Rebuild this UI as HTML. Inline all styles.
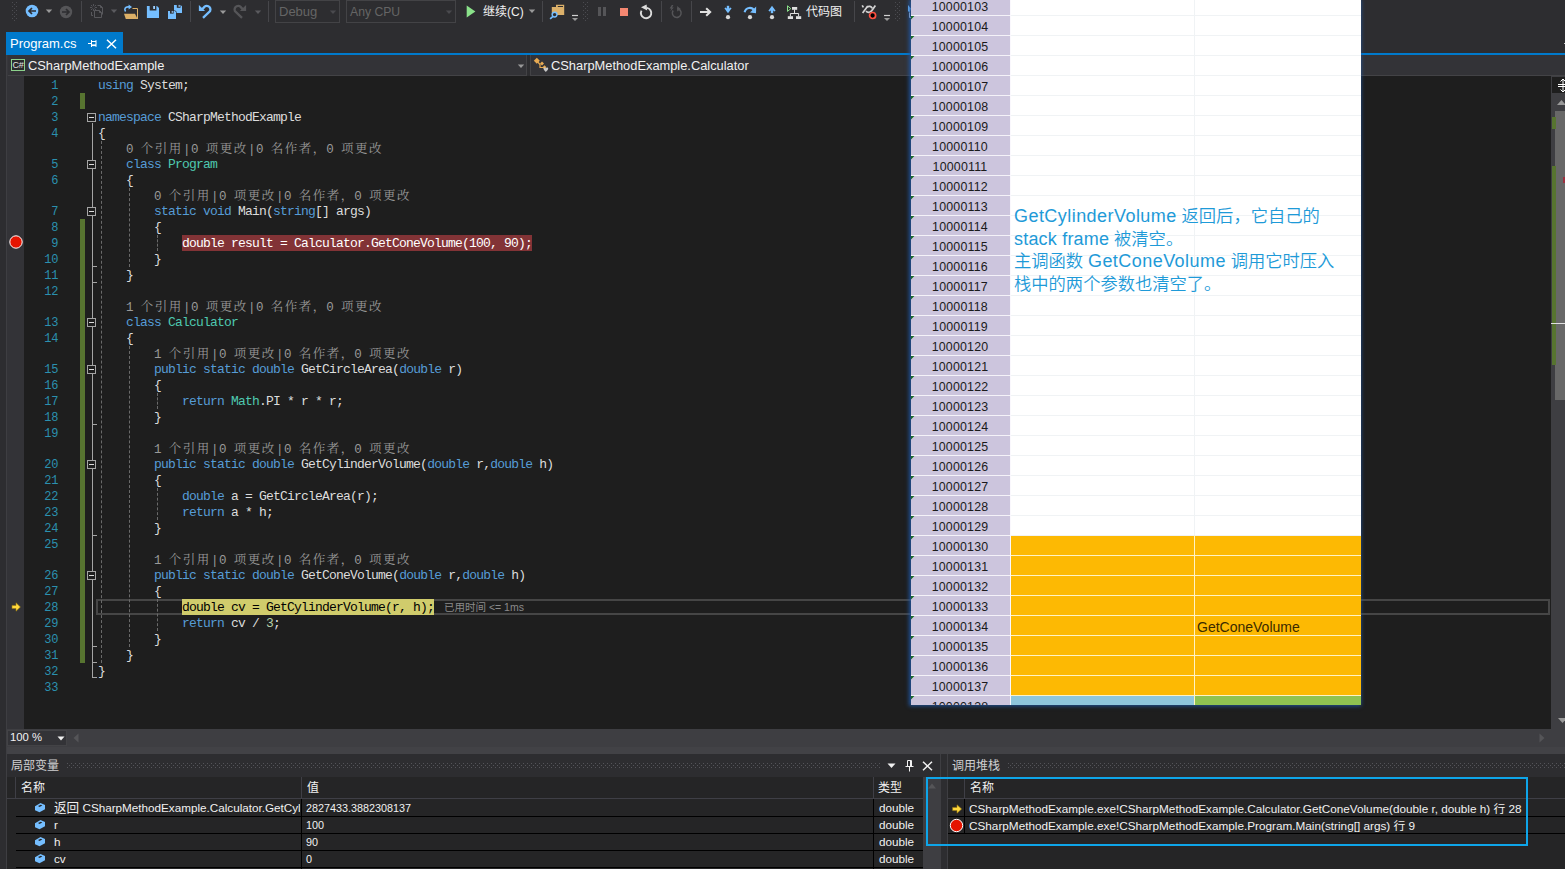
<!DOCTYPE html>
<html lang="zh"><head><meta charset="utf-8"><title>Program.cs</title><style>
html,body{margin:0;padding:0}
body{width:1565px;height:869px;overflow:hidden;background:#2d2d30;position:relative;font-family:"Liberation Sans","Noto Sans CJK SC",sans-serif;font-size:12px;color:#f1f1f1}
.a{position:absolute}
.ui{font-family:"Liberation Sans","Noto Sans CJK SC",sans-serif}
#editor{left:6px;top:76px;width:1545px;height:653px;background:#1e1e1e;overflow:hidden}
.ln{position:absolute;left:0;width:52.3px;text-align:right;color:#2b91af;font-family:"Liberation Mono","Noto Serif CJK SC",monospace;font-size:12px;letter-spacing:-0.2px;height:16px;line-height:16px}
.cl{position:absolute;left:92px;height:16px;line-height:16px;white-space:pre;font-family:"Liberation Mono","Noto Serif CJK SC",monospace;font-size:13px;letter-spacing:-0.8px;color:#dcdcdc}
.cl .k{color:#569cd6}
.cl .t{color:#4ec9b0}
.cl .n{color:#b5cea8}
.lens{position:absolute;height:15px;line-height:15px;white-space:pre;font-family:"Liberation Mono","Noto Serif CJK SC",monospace;font-size:12.5px;color:#999}
.lens .h{letter-spacing:-0.5px}
.lens .z{letter-spacing:1.5px;margin-left:0.75px;margin-right:-0.75px}
.lens .s{letter-spacing:-0.5px;margin:0 1px}
.ob{position:absolute;left:81px;width:7px;height:7px;border:1px solid #a5a5a5;background:#1e1e1e}
.ob:after{content:"";position:absolute;left:1px;top:3px;width:5px;height:1px;background:#dcdcdc}
.vl{position:absolute;width:1px;background:#a5a5a5}
.dl{position:absolute;width:0;border-left:1px dashed #6a6a6a}
.sep{position:absolute;top:1px;width:1px;height:21px;background:#46464a}
.row{position:absolute;left:0;height:17px;line-height:17px;white-space:nowrap}

#bp{color:#fff}
#cur{color:#000}

.xa{position:absolute;left:0;width:98px;padding-right:1px;height:19px;background:#ccc5dd;text-align:center;font-size:12.4px;letter-spacing:0.2px;line-height:22px;color:#1a1a1a}
#note .lt{font-weight:400;font-size:18px;letter-spacing:0.45px}
.dots{background:conic-gradient(from 270deg at 1px 1px,#545459 90deg,transparent 0) 0 0/4px 4px,conic-gradient(from 270deg at 1px 1px,#545459 90deg,transparent 0) 2px 2px/4px 4px}
</style></head><body>
<div id="toolbar" class="a" style="left:0;top:0;width:1565px;height:32px;background:#2d2d30">
<!-- grip -->
<svg class="a" style="left:11px;top:1px" width="7" height="21" viewBox="0 0 7 21"><g fill="#4b4b50"><rect x="1" y="1" width="1" height="1"/><rect x="5" y="1" width="1" height="1"/><rect x="3" y="3" width="1" height="1"/><rect x="1" y="5" width="1" height="1"/><rect x="5" y="5" width="1" height="1"/><rect x="3" y="7" width="1" height="1"/><rect x="1" y="9" width="1" height="1"/><rect x="5" y="9" width="1" height="1"/><rect x="3" y="11" width="1" height="1"/><rect x="1" y="13" width="1" height="1"/><rect x="5" y="13" width="1" height="1"/><rect x="3" y="15" width="1" height="1"/><rect x="1" y="17" width="1" height="1"/><rect x="5" y="17" width="1" height="1"/><rect x="3" y="19" width="1" height="1"/></g></svg>
<!-- back -->
<svg class="a" style="left:24px;top:3px" width="16" height="16" viewBox="0 0 16 16"><circle cx="8" cy="8" r="6.3" fill="#75beff"/><path d="M12 8H5.2M8 5L5 8L8 11" stroke="#2d2d30" stroke-width="1.7" fill="none"/></svg>
<svg class="a" style="left:45px;top:9px" width="8" height="5" viewBox="0 0 8 5"><path d="M0.8 0.6H7.2L4 4.1Z" fill="#999"/></svg>
<!-- forward -->
<svg class="a" style="left:58px;top:4px" width="16" height="16" viewBox="0 0 16 16"><circle cx="8" cy="8" r="6.2" fill="#555558"/><path d="M4 8H10.8M8 5L11 8L8 11" stroke="#2d2d30" stroke-width="1.7" fill="none"/></svg>
<div class="sep" style="left:81px"></div>
<!-- new item (disabled) -->
<svg class="a" style="left:89px;top:3px" width="16" height="17" viewBox="0 0 16 17"><g stroke="#58585c" fill="none" stroke-width="1"><path d="M8.5 2.5H11.5L13.5 4.5V11.5M11.5 2.5V4.5H13.5"/><path d="M5.5 7.5H10.5L12.5 9.5V14.5H5.5ZM10.5 7.5V9.5H12.5" /><path d="M2.5 9V12.5H4"/><path d="M4.5 1V8M1 4.5H8M2 2L7 7M7 2L2 7" stroke-width="0.9"/></g><circle cx="4.5" cy="4.5" r="1.4" fill="#2d2d30"/></svg>
<svg class="a" style="left:110px;top:9px" width="8" height="5" viewBox="0 0 8 5"><path d="M0.8 0.6H7.2L4 4.1Z" fill="#5a5a5e"/></svg>
<!-- open -->
<svg class="a" style="left:123px;top:3px" width="17" height="17" viewBox="0 0 17 17"><path d="M9.5 5.5H14.5V16" stroke="#dcb067" fill="none" stroke-width="1"/><path d="M1 10.7H12L14.6 16H2.8Z" fill="#dcb067"/><path d="M2.6 8.4C0.8 6 2.4 3.9 5 3.9H6.5" stroke="#75beff" stroke-width="1.6" fill="none"/><path d="M5.6 1.4L9 4L5.6 6.6Z" fill="#75beff"/></svg>
<!-- save -->
<svg class="a" style="left:146px;top:5px" width="14" height="14" viewBox="0 0 14 14"><path d="M0.9 1H11L13 3V13.1H0.9Z" fill="#75beff"/><rect x="3.7" y="1" width="6.7" height="4.5" fill="#2d2d30"/><rect x="7.2" y="1" width="1.8" height="3" fill="#9fd0ff"/></svg>
<!-- save all -->
<svg class="a" style="left:167px;top:4px" width="16" height="16" viewBox="0 0 16 16"><path d="M7 0.9H13.6L15 2.3V9H7Z" fill="#75beff"/><rect x="9.8" y="0.9" width="3.7" height="2.9" fill="#2d2d30"/><rect x="11.6" y="0.9" width="1.1" height="2" fill="#9fd0ff"/><path d="M0.5 6.4H8.2L9.6 7.8V15.5H0.5Z" fill="#2d2d30"/><path d="M1 6.9H7.8L9 8.1V15H1Z" fill="#75beff"/><rect x="3" y="6.9" width="3.6" height="2.7" fill="#2d2d30"/><rect x="4.7" y="6.9" width="1.1" height="1.9" fill="#9fd0ff"/></svg>
<div class="sep" style="left:190px"></div>
<!-- undo -->
<svg class="a" style="left:197px;top:3px" width="16" height="17" viewBox="0 0 16 17"><path d="M4.4 7Q5.6 5.7 6.5 5A3.6 3.6 0 1 1 13.1 8L6 14.8" stroke="#75beff" stroke-width="2.3" fill="none"/><path d="M1.9 1.9V8.1H8.1Z" fill="#75beff"/></svg>
<svg class="a" style="left:219px;top:10px" width="8" height="5" viewBox="0 0 8 5"><path d="M0.8 0.6H7.2L4 4.1Z" fill="#999"/></svg>
<!-- redo -->
<svg class="a" style="left:232px;top:3px" width="16" height="17" viewBox="0 0 16 17"><g transform="translate(16,0) scale(-1,1)"><path d="M4.4 7Q5.6 5.7 6.5 5A3.6 3.6 0 1 1 13.1 8L6 14.8" stroke="#555558" stroke-width="2.3" fill="none"/><path d="M1.9 1.9V8.1H8.1Z" fill="#555558"/></g></svg>
<svg class="a" style="left:254px;top:10px" width="8" height="5" viewBox="0 0 8 5"><path d="M0.8 0.6H7.2L4 4.1Z" fill="#5a5a5e"/></svg>
<div class="sep" style="left:268px"></div>
<!-- combos -->
<div class="a" style="left:275px;top:0px;width:63px;height:21px;border:1px solid #434346"></div>
<div class="a" style="left:279px;top:2px;height:20px;line-height:20px;font-size:13px;color:#656565">Debug</div>
<svg class="a" style="left:329px;top:10px" width="8" height="5" viewBox="0 0 8 5"><path d="M0.8 0.6H7.2L4 4.1Z" fill="#4a4a4e"/></svg>
<div class="a" style="left:346px;top:0px;width:108px;height:21px;border:1px solid #434346"></div>
<div class="a" style="left:350px;top:2px;height:20px;line-height:20px;font-size:12.2px;color:#656565">Any CPU</div>
<svg class="a" style="left:445px;top:10px" width="8" height="5" viewBox="0 0 8 5"><path d="M0.8 0.6H7.2L4 4.1Z" fill="#4a4a4e"/></svg>
<!-- continue -->
<svg class="a" style="left:466px;top:5px" width="10" height="13" viewBox="0 0 10 13"><path d="M0.7 0.4L9.4 6.4L0.7 12.4Z" fill="#8ae28a"/></svg>
<div class="a" style="left:483px;top:2px;height:20px;line-height:20px;font-size:12px;color:#f1f1f1;white-space:nowrap">继续(C)</div>
<svg class="a" style="left:528px;top:9px" width="8" height="5" viewBox="0 0 8 5"><path d="M0.8 0.6H7.2L4 4.1Z" fill="#999"/></svg>
<div class="sep" style="left:542px"></div>
<!-- find in files -->
<svg class="a" style="left:549px;top:4px" width="17" height="16" viewBox="0 0 17 16"><path d="M2.8 3H7V0.8H15.2V11H2.8Z" fill="#dbb06a"/><rect x="8.8" y="2" width="5.2" height="1" fill="#2d2d30"/><circle cx="5.6" cy="10.6" r="2.4" fill="#2d2d30" stroke="#75beff" stroke-width="1.4"/><path d="M4 12.3L1.1 14.8" stroke="#75beff" stroke-width="1.7"/></svg>
<svg class="a" style="left:571px;top:14px" width="8" height="8" viewBox="0 0 8 8"><rect x="1" y="0.9" width="6" height="1.2" fill="#d0d0d0"/><path d="M1 3.9H7L4 7Z" fill="#999"/></svg>
<svg class="a" style="left:582px;top:1px" width="7" height="21" viewBox="0 0 7 21"><g fill="#4b4b50"><rect x="1" y="1" width="1" height="1"/><rect x="5" y="1" width="1" height="1"/><rect x="3" y="3" width="1" height="1"/><rect x="1" y="5" width="1" height="1"/><rect x="5" y="5" width="1" height="1"/><rect x="3" y="7" width="1" height="1"/><rect x="1" y="9" width="1" height="1"/><rect x="5" y="9" width="1" height="1"/><rect x="3" y="11" width="1" height="1"/><rect x="1" y="13" width="1" height="1"/><rect x="5" y="13" width="1" height="1"/><rect x="3" y="15" width="1" height="1"/><rect x="1" y="17" width="1" height="1"/><rect x="5" y="17" width="1" height="1"/><rect x="3" y="19" width="1" height="1"/></g></svg>
<!-- pause -->
<div class="a" style="left:598px;top:7px;width:3px;height:9px;background:#555558"></div>
<div class="a" style="left:603px;top:7px;width:3px;height:9px;background:#555558"></div>
<!-- stop -->
<div class="a" style="left:620px;top:8px;width:8px;height:8px;background:#f48771"></div>
<!-- restart -->
<svg class="a" style="left:638px;top:4px" width="16" height="17" viewBox="0 0 16 17"><path d="M8.9 3.9A5.2 5.2 0 1 1 3.5 6.6" stroke="#dcdcdc" stroke-width="1.9" fill="none"/><path d="M3 3.3L8.6 0.5L9.2 6.4Z" fill="#dcdcdc"/></svg>
<div class="sep" style="left:661px"></div>
<!-- apply changes (disabled) -->
<svg class="a" style="left:668px;top:4px" width="16" height="17" viewBox="0 0 16 17"><path d="M5.1 6.5A4.4 4.4 0 1 0 9.1 4.6" stroke="#555558" stroke-width="1.5" fill="none"/><path d="M9.2 2L12.8 4.9L9.2 7.4Z" fill="#555558"/><path d="M3.8 1L1.6 4.4H3.4L2.2 7.6L5.8 3.6H4L5.4 1Z" fill="#555558"/></svg>
<div class="sep" style="left:691px"></div>
<!-- show next statement -->
<svg class="a" style="left:699px;top:6px" width="13" height="12" viewBox="0 0 13 12"><path d="M1 6H11M7.2 2.2L11.2 6L7.2 9.8" stroke="#e0e0e0" stroke-width="2" fill="none"/></svg>
<!-- step into -->
<svg class="a" style="left:722px;top:4px" width="12" height="17" viewBox="0 0 12 17"><path d="M6 1.8V7.5" stroke="#75beff" stroke-width="2.4" fill="none"/><path d="M2.4 4.2L6 9.2L9.6 4.2L8.2 3.4L6 5.8L3.8 3.4Z" fill="#75beff"/><circle cx="6" cy="13.2" r="2.1" fill="#d8d8d8"/></svg>
<!-- step over -->
<svg class="a" style="left:743px;top:4px" width="15" height="17" viewBox="0 0 15 17"><path d="M1.6 8.2C3 3 9 2.6 11.2 6.6" stroke="#75beff" stroke-width="2.1" fill="none"/><path d="M13.2 2.6L13 9.2L7 8.4Z" fill="#75beff"/><circle cx="7" cy="13.2" r="2.1" fill="#d8d8d8"/></svg>
<!-- step out -->
<svg class="a" style="left:766px;top:4px" width="12" height="17" viewBox="0 0 12 17"><path d="M6 9.2V4" stroke="#75beff" stroke-width="2.4" fill="none"/><path d="M2.4 6.8L6 1.8L9.6 6.8L8.2 7.6L6 5.2L3.8 7.6Z" fill="#75beff"/><circle cx="6" cy="13.2" r="2.1" fill="#d8d8d8"/></svg>
<!-- code map -->
<svg class="a" style="left:786px;top:4px" width="16" height="16" viewBox="0 0 16 16"><path d="M1.5 1.8L4.8 4.6L1.5 7.4Z" fill="none" stroke="#8ae28a" stroke-width="1"/><rect x="6" y="3" width="5.2" height="2.8" fill="#e0e0e0"/><rect x="1.8" y="12.2" width="5.2" height="2.8" fill="#e0e0e0"/><rect x="10" y="12.2" width="5.2" height="2.8" fill="#e0e0e0"/><path d="M8.5 5.5V9.5M4.4 12.4V9.5H12.6V12.4" stroke="#e0e0e0" stroke-width="1" fill="none"/></svg>
<div class="a" style="left:806px;top:2px;height:20px;line-height:20px;font-size:12px;color:#f1f1f1;white-space:nowrap">代码图</div>
<div class="sep" style="left:854px"></div>
<!-- intellitrace-ish -->
<svg class="a" style="left:861px;top:4px" width="16" height="16" viewBox="0 0 16 16"><g stroke="#d4d4d4" stroke-width="1.7" fill="none"><path d="M1.6 9L6.8 2"/><path d="M10.2 7.4L14.4 1.6"/><path d="M6 3.2C8 1.6 10 2.2 11.4 4.4"/><path d="M5 7.2C6.6 8.8 8.8 8.6 10.4 7"/><path d="M1.2 1.4L2.4 3.4"/></g><circle cx="11.6" cy="11.5" r="3" fill="#000" stroke="#ff5040" stroke-width="1.7"/></svg>
<svg class="a" style="left:883px;top:14px" width="8" height="8" viewBox="0 0 8 8"><rect x="1" y="0.9" width="6" height="1.2" fill="#d0d0d0"/><path d="M1 3.9H7L4 7Z" fill="#999"/></svg>
<svg class="a" style="left:894px;top:1px" width="7" height="21" viewBox="0 0 7 21"><g fill="#4b4b50"><rect x="1" y="1" width="1" height="1"/><rect x="5" y="1" width="1" height="1"/><rect x="3" y="3" width="1" height="1"/><rect x="1" y="5" width="1" height="1"/><rect x="5" y="5" width="1" height="1"/><rect x="3" y="7" width="1" height="1"/><rect x="1" y="9" width="1" height="1"/><rect x="5" y="9" width="1" height="1"/><rect x="3" y="11" width="1" height="1"/><rect x="1" y="13" width="1" height="1"/><rect x="5" y="13" width="1" height="1"/><rect x="3" y="15" width="1" height="1"/><rect x="1" y="17" width="1" height="1"/><rect x="5" y="17" width="1" height="1"/><rect x="3" y="19" width="1" height="1"/></g></svg>
<svg class="a" style="left:906px;top:4px" width="6" height="15" viewBox="0 0 6 15"><path d="M2 1L5 4.5L3.5 8.5L2 7Z" fill="#75beff"/><path d="M3.5 8.5V13.5H5" stroke="#d0d8e8" stroke-width="1" fill="none"/></svg>
<div class="a" style="left:1564px;top:43px;width:1px;height:1px;background:#c8c8c8"></div>
</div>

<div class="a" style="left:6px;top:32px;width:117px;height:22px;background:#007acc"></div>
<div class="a" style="left:6px;top:53px;width:1559px;height:2px;background:#007acc"></div>
<div id="tabtxt" class="a" style="left:10px;top:34px;height:20px;line-height:20px;font-size:13px;color:#fff;white-space:nowrap">Program.cs</div>
<svg class="a" style="left:88px;top:39px" width="10" height="10" viewBox="0 0 10 10"><path d="M0 4.5H3.5M3.5 1V8M3.5 2.5H8M8 1.2V7.8" stroke="#fff" stroke-width="1" fill="none"/><rect x="3.5" y="5.4" width="4.5" height="1.7" fill="#fff"/></svg>
<svg class="a" style="left:106px;top:39px" width="11" height="10" viewBox="0 0 11 10"><path d="M1 0.8L10 9.2M10 0.8L1 9.2" stroke="#fff" stroke-width="1.5" fill="none"/></svg>
<!-- nav bar -->
<div class="a" style="left:6px;top:55px;width:1559px;height:21px;background:#2d2d30"></div><div class="a" style="left:7px;top:55px;width:1px;height:21px;background:#37373b"></div>
<div class="a" style="left:8px;top:55px;width:518px;height:20px;background:#333337;border-right:1px solid #434346;border-bottom:1px solid #434346"></div>
<div class="a" style="left:530px;top:55px;width:1035px;height:20px;background:#333337;border-left:1px solid #434346;border-bottom:1px solid #434346"></div>
<div class="a" style="left:11px;top:59px;width:12px;height:10px;border:1px solid #8cd28c;background:#2a2a2c"></div>
<div class="a" style="left:12px;top:60px;width:12px;height:10px;line-height:10px;font-size:9px;color:#e0e0e0;text-align:center;letter-spacing:-0.2px">C#</div>
<div id="nav1" class="a" style="left:28px;top:56px;height:20px;line-height:20px;font-size:12.85px;color:#f1f1f1;white-space:nowrap">CSharpMethodExample</div>
<svg class="a" style="left:517px;top:64px" width="8" height="5" viewBox="0 0 8 5"><path d="M0.8 0.6H7.2L4 4.1Z" fill="#999"/></svg>
<svg class="a" style="left:533px;top:57px" width="16" height="16" viewBox="0 0 16 16"><path d="M4 4L7 7.5V10.5H12" stroke="#e8ab53" stroke-width="1.2" fill="none"/><path d="M3.8 0.8L6.8 3.8L3.8 6.8L0.8 3.8Z" fill="#e8ab53"/><path d="M9 4.5L11 6.5L9 8.5L7 6.5Z" fill="#e8ab53"/><path d="M11.5 8.3L13.5 10.3L11.5 12.3L9.5 10.3Z" fill="#e8ab53"/><path d="M10.5 11.5C10.5 10.3 12.3 10.3 12.8 11.3C13.3 10.3 15.2 10.3 15.2 11.5C15.2 13 13.5 14 12.8 15C12.2 14 10.5 13 10.5 11.5Z" fill="#c8c8c8"/></svg>
<div id="nav2" class="a" style="left:551px;top:56px;height:20px;line-height:20px;font-size:12.85px;color:#f1f1f1;white-space:nowrap">CSharpMethodExample.Calculator</div>

<div id="editor" class="a">
<div class="a" style="left:0;top:0;width:18px;height:653px;background:#333337"></div>
<div class="a" style="left:90px;top:523px;width:1450px;height:12px;border:2px solid #464646"></div>
<div class="a" style="left:176px;top:159px;width:350px;height:16px;background:#823336"></div>
<div class="a" style="left:176px;top:523px;width:252px;height:16px;background:#d0cc6c"></div>
<div class="a" style="left:73.5px;top:17px;width:5px;height:16px;background:#577430"></div>
<div class="a" style="left:73.5px;top:143px;width:5px;height:444px;background:#577430"></div>
<div class="vl" style="left:86px;top:47px;height:555px"></div>
<div class="a" style="left:86px;top:190px;width:5px;height:1px;background:#a5a5a5"></div>
<div class="a" style="left:86px;top:206px;width:5px;height:1px;background:#a5a5a5"></div>
<div class="a" style="left:86px;top:348px;width:5px;height:1px;background:#a5a5a5"></div>
<div class="a" style="left:86px;top:459px;width:5px;height:1px;background:#a5a5a5"></div>
<div class="a" style="left:86px;top:570px;width:5px;height:1px;background:#a5a5a5"></div>
<div class="a" style="left:86px;top:586px;width:5px;height:1px;background:#a5a5a5"></div>
<div class="a" style="left:86px;top:601px;width:5px;height:1px;background:#a5a5a5"></div>
<div class="dl" style="left:95px;top:65px;height:522px"></div>
<div class="dl" style="left:123px;top:112px;height:79px"></div>
<div class="dl" style="left:123px;top:270px;height:301px"></div>
<div class="dl" style="left:151px;top:159px;height:16px"></div>
<div class="dl" style="left:151px;top:317px;height:16px"></div>
<div class="dl" style="left:151px;top:412px;height:32px"></div>
<div class="dl" style="left:151px;top:523px;height:32px"></div>
<div class="ob" style="top:37px"></div>
<div class="ob" style="top:84px"></div>
<div class="ob" style="top:131px"></div>
<div class="ob" style="top:242px"></div>
<div class="ob" style="top:289px"></div>
<div class="ob" style="top:384px"></div>
<div class="ob" style="top:495px"></div>
<div class="ln" style="top:2px">1</div>
<div class="cl" style="top:2px"><span class="k">using</span> System;</div>
<div class="ln" style="top:18px">2</div>
<div class="ln" style="top:34px">3</div>
<div class="cl" style="top:34px"><span class="k">namespace</span> CSharpMethodExample</div>
<div class="ln" style="top:50px">4</div>
<div class="cl" style="top:50px">{</div>
<div class="ln" style="top:81px">5</div>
<div class="cl" style="top:81px">    <span class="k">class</span> <span class="t">Program</span></div>
<div class="lens" style="left:120px;top:66.5px"><span class="h">0 </span><span class="z">个引用</span><span class="s">|</span><span class="h">0 </span><span class="z">项更改</span><span class="s">|</span><span class="h">0 </span><span class="z">名作者，</span><span class="h">0 </span><span class="z">项更改</span></div>
<div class="ln" style="top:97px">6</div>
<div class="cl" style="top:97px">    {</div>
<div class="ln" style="top:128px">7</div>
<div class="cl" style="top:128px">        <span class="k">static</span> <span class="k">void</span> Main(<span class="k">string</span>[] args)</div>
<div class="lens" style="left:148px;top:113.5px"><span class="h">0 </span><span class="z">个引用</span><span class="s">|</span><span class="h">0 </span><span class="z">项更改</span><span class="s">|</span><span class="h">0 </span><span class="z">名作者，</span><span class="h">0 </span><span class="z">项更改</span></div>
<div class="ln" style="top:144px">8</div>
<div class="cl" style="top:144px">        {</div>
<div class="ln" style="top:160px">9</div>
<div class="cl" style="top:160px">            <span id="bp">double result = Calculator.GetConeVolume(100, 90);</span></div>
<div class="ln" style="top:176px">10</div>
<div class="cl" style="top:176px">        }</div>
<div class="ln" style="top:192px">11</div>
<div class="cl" style="top:192px">    }</div>
<div class="ln" style="top:208px">12</div>
<div class="ln" style="top:239px">13</div>
<div class="cl" style="top:239px">    <span class="k">class</span> <span class="t">Calculator</span></div>
<div class="lens" style="left:120px;top:224.5px"><span class="h">1 </span><span class="z">个引用</span><span class="s">|</span><span class="h">0 </span><span class="z">项更改</span><span class="s">|</span><span class="h">0 </span><span class="z">名作者，</span><span class="h">0 </span><span class="z">项更改</span></div>
<div class="ln" style="top:255px">14</div>
<div class="cl" style="top:255px">    {</div>
<div class="ln" style="top:286px">15</div>
<div class="cl" style="top:286px">        <span class="k">public</span> <span class="k">static</span> <span class="k">double</span> GetCircleArea(<span class="k">double</span> r)</div>
<div class="lens" style="left:148px;top:271.5px"><span class="h">1 </span><span class="z">个引用</span><span class="s">|</span><span class="h">0 </span><span class="z">项更改</span><span class="s">|</span><span class="h">0 </span><span class="z">名作者，</span><span class="h">0 </span><span class="z">项更改</span></div>
<div class="ln" style="top:302px">16</div>
<div class="cl" style="top:302px">        {</div>
<div class="ln" style="top:318px">17</div>
<div class="cl" style="top:318px">            <span class="k">return</span> <span class="t">Math</span>.PI * r * r;</div>
<div class="ln" style="top:334px">18</div>
<div class="cl" style="top:334px">        }</div>
<div class="ln" style="top:350px">19</div>
<div class="ln" style="top:381px">20</div>
<div class="cl" style="top:381px">        <span class="k">public</span> <span class="k">static</span> <span class="k">double</span> GetCylinderVolume(<span class="k">double</span> r,<span class="k">double</span> h)</div>
<div class="lens" style="left:148px;top:366.5px"><span class="h">1 </span><span class="z">个引用</span><span class="s">|</span><span class="h">0 </span><span class="z">项更改</span><span class="s">|</span><span class="h">0 </span><span class="z">名作者，</span><span class="h">0 </span><span class="z">项更改</span></div>
<div class="ln" style="top:397px">21</div>
<div class="cl" style="top:397px">        {</div>
<div class="ln" style="top:413px">22</div>
<div class="cl" style="top:413px">            <span class="k">double</span> a = GetCircleArea(r);</div>
<div class="ln" style="top:429px">23</div>
<div class="cl" style="top:429px">            <span class="k">return</span> a * h;</div>
<div class="ln" style="top:445px">24</div>
<div class="cl" style="top:445px">        }</div>
<div class="ln" style="top:461px">25</div>
<div class="ln" style="top:492px">26</div>
<div class="cl" style="top:492px">        <span class="k">public</span> <span class="k">static</span> <span class="k">double</span> GetConeVolume(<span class="k">double</span> r,<span class="k">double</span> h)</div>
<div class="lens" style="left:148px;top:477.5px"><span class="h">1 </span><span class="z">个引用</span><span class="s">|</span><span class="h">0 </span><span class="z">项更改</span><span class="s">|</span><span class="h">0 </span><span class="z">名作者，</span><span class="h">0 </span><span class="z">项更改</span></div>
<div class="ln" style="top:508px">27</div>
<div class="cl" style="top:508px">        {</div>
<div class="ln" style="top:524px">28</div>
<div class="cl" style="top:524px">            <span id="cur">double cv = GetCylinderVolume(r, h);</span></div>
<div class="ln" style="top:540px">29</div>
<div class="cl" style="top:540px">            <span class="k">return</span> cv / <span class="n">3</span>;</div>
<div class="ln" style="top:556px">30</div>
<div class="cl" style="top:556px">        }</div>
<div class="ln" style="top:572px">31</div>
<div class="cl" style="top:572px">    }</div>
<div class="ln" style="top:588px">32</div>
<div class="cl" style="top:588px">}</div>
<div class="ln" style="top:604px">33</div>
<svg class="a" style="left:2.5px;top:159.4px" width="14" height="14" viewBox="0 0 14 14"><circle cx="7" cy="7" r="6.2" fill="#e51400" stroke="#ffffff" stroke-width="1"/></svg>
<svg class="a" style="left:4px;top:525px" width="12" height="12" viewBox="0 0 12 12"><path d="M2 4.4H6V1.8L10.4 6L6 10.2V7.6H2Z" fill="#ffd83c" stroke="#9a7a10" stroke-width="0.6"/></svg>
<div class="a ui" style="left:438px;top:523px;height:16px;line-height:16px;font-size:10.5px;color:#8a8a8a;white-space:nowrap">已用时间 &lt;= 1ms</div>
</div>
<div class="a" style="left:1551px;top:76px;width:14px;height:653px;background:#3e3e42"></div>
<div class="a" style="left:1552px;top:77px;width:13px;height:16px;background:#1e1e1e"></div>
<svg class="a" style="left:1557.5px;top:78px" width="10" height="15" viewBox="0 0 10 15"><path d="M5 1V14M2.5 3.5L5 1L7.5 3.5M2.5 11.5L5 14L7.5 11.5M0 6.5H10M0 8.5H10" stroke="#fff" stroke-width="1" fill="none"/></svg>
<div class="a" style="left:1555px;top:111px;width:10px;height:289px;background:#686868"></div>
<div class="a" style="left:1552px;top:117px;width:4px;height:12px;background:#577430"></div>
<div class="a" style="left:1552px;top:166px;width:4px;height:199px;background:#577430"></div>
<div class="a" style="left:1563px;top:177px;width:2px;height:6px;background:#9d3040"></div>
<div class="a" style="left:1551px;top:323px;width:14px;height:1px;background:#e0e0e0"></div>
<svg class="a" style="left:1557px;top:99px" width="8" height="6" viewBox="0 0 8 6"><path d="M0 6L4.5 1L9 6Z" fill="#999"/></svg>
<svg class="a" style="left:1558px;top:718px" width="8" height="6" viewBox="0 0 8 6"><path d="M0 0L4.5 5L9 0Z" fill="#999"/></svg>

<!-- hscroll row -->
<div class="a" style="left:6px;top:729px;width:1559px;height:25px;background:#3e3e42"></div>
<div class="a" style="left:6px;top:747px;width:1559px;height:7px;background:#424246"></div>
<div class="a" style="left:7px;top:730px;width:58px;height:14px;background:#333337;border:1px solid #434346"></div>
<div class="a" style="left:10px;top:730px;height:16px;line-height:15px;font-size:11.3px;color:#f1f1f1;white-space:nowrap">100 %</div>
<svg class="a" style="left:57px;top:736px" width="8" height="5" viewBox="0 0 8 5"><path d="M0.5 0.5H7.5L4 4.5Z" fill="#f1f1f1"/></svg>
<svg class="a" style="left:73px;top:733px" width="6" height="10" viewBox="0 0 6 10"><path d="M5.5 0.5V9.5L0.5 5Z" fill="#555558"/></svg>
<svg class="a" style="left:1539px;top:733px" width="6" height="10" viewBox="0 0 6 10"><path d="M0.5 0.5V9.5L5.5 5Z" fill="#555558"/></svg>
<!-- locals panel -->
<div class="a" style="left:7px;top:754px;width:933px;height:115px;background:#2d2d30"></div>
<div class="a" style="left:11px;top:756px;height:20px;line-height:20px;font-size:12px;color:#d0d0d0;white-space:nowrap">局部变量</div>
<div class="a dots" style="left:67px;top:763px;width:814px;height:5px"></div>
<svg class="a" style="left:887px;top:763px" width="9" height="6" viewBox="0 0 9 6"><path d="M0.5 0.5H8.5L4.5 5Z" fill="#f1f1f1"/></svg>
<svg class="a" style="left:905px;top:760px" width="9" height="12" viewBox="0 0 9 12"><path d="M2.5 0.5H6.5M2.5 0.5V6.5M5.5 0.5V6.5M6.5 0.5V6.5M0.5 6.5H8.5M4.5 6.5V11.5" stroke="#f1f1f1" stroke-width="1" fill="none"/></svg>
<svg class="a" style="left:922px;top:761px" width="11" height="10" viewBox="0 0 11 10"><path d="M1 0.8L10 9.2M10 0.8L1 9.2" stroke="#f1f1f1" stroke-width="1.5" fill="none"/></svg>
<div class="a" style="left:7px;top:777px;width:916px;height:92px;background:#252526"></div>
<div class="a" style="left:923px;top:777px;width:17px;height:92px;background:#3e3e42"></div>
<svg class="a" style="left:928px;top:783px" width="8" height="6" viewBox="0 0 8 6"><path d="M0 5.5L4 0.5L8 5.5Z" fill="#555558"/></svg>
<!-- header -->
<div class="a" style="left:7px;top:798px;width:916px;height:1px;background:#3f3f46"></div>
<div class="a" style="left:15px;top:777px;width:1px;height:21px;background:#3f3f46"></div>
<div class="a" style="left:301px;top:777px;width:1px;height:21px;background:#3f3f46"></div>
<div class="a" style="left:873px;top:777px;width:1px;height:21px;background:#3f3f46"></div>
<div class="a" style="left:21px;top:778px;height:20px;line-height:20px;font-size:12px;color:#f1f1f1">名称</div>
<div class="a" style="left:307px;top:778px;height:20px;line-height:20px;font-size:12px;color:#f1f1f1">值</div>
<div class="a" style="left:878px;top:778px;height:20px;line-height:20px;font-size:12px;color:#f1f1f1">类型</div>
<!-- data grid lines -->
<div class="a" style="left:301px;top:799px;width:1px;height:70px;background:#000"></div>
<div class="a" style="left:873px;top:799px;width:1px;height:70px;background:#000"></div>
<div class="a" style="left:16px;top:816px;width:907px;height:1px;background:#000"></div>
<div class="a" style="left:16px;top:833px;width:907px;height:1px;background:#000"></div>
<div class="a" style="left:16px;top:850px;width:907px;height:1px;background:#000"></div>
<div class="a" style="left:16px;top:867px;width:907px;height:1px;background:#000"></div>
<!-- rows -->
<div id="locrows" class="a" style="left:0;top:799px;width:923px;height:70px;font-size:11.7px;color:#f1f1f1">
 <div class="row" style="top:0"><svg class="a" style="left:34px;top:3px" width="12" height="11" viewBox="0 0 12 11"><path d="M1 4.2L6.5 1L11 3V7.2L5.5 10.2L1 8.2Z" fill="#75beff"/><path d="M4 4.1L6.8 2.7L8.3 3.4L5.5 4.9Z" fill="#252526"/></svg><span class="a" style="left:54px;width:246px;overflow:hidden"><span style="font-size:12.6px">返回</span> CSharpMethodExample.Calculator.GetCylinderVolume</span><span class="a" style="left:306px;top:0.5px;font-size:10.8px">2827433.3882308137</span><span class="a" style="left:879px">double</span></div>
 <div class="row" style="top:17px"><svg class="a" style="left:34px;top:3px" width="12" height="11" viewBox="0 0 12 11"><path d="M1 4.2L6.5 1L11 3V7.2L5.5 10.2L1 8.2Z" fill="#75beff"/><path d="M4 4.1L6.8 2.7L8.3 3.4L5.5 4.9Z" fill="#252526"/></svg><span class="a" style="left:54px">r</span><span class="a" style="left:306px;top:0.5px;font-size:10.8px">100</span><span class="a" style="left:879px">double</span></div>
 <div class="row" style="top:34px"><svg class="a" style="left:34px;top:3px" width="12" height="11" viewBox="0 0 12 11"><path d="M1 4.2L6.5 1L11 3V7.2L5.5 10.2L1 8.2Z" fill="#75beff"/><path d="M4 4.1L6.8 2.7L8.3 3.4L5.5 4.9Z" fill="#252526"/></svg><span class="a" style="left:54px">h</span><span class="a" style="left:306px;top:0.5px;font-size:10.8px">90</span><span class="a" style="left:879px">double</span></div>
 <div class="row" style="top:51px"><svg class="a" style="left:34px;top:3px" width="12" height="11" viewBox="0 0 12 11"><path d="M1 4.2L6.5 1L11 3V7.2L5.5 10.2L1 8.2Z" fill="#75beff"/><path d="M4 4.1L6.8 2.7L8.3 3.4L5.5 4.9Z" fill="#252526"/></svg><span class="a" style="left:54px">cv</span><span class="a" style="left:306px;top:0.5px;font-size:10.8px">0</span><span class="a" style="left:879px">double</span></div>
</div>
<!-- splitter -->
<div class="a" style="left:940px;top:754px;width:8px;height:115px;background:#2d2d30;border-left:1px solid #3e3e42;border-right:1px solid #3e3e42;box-sizing:border-box"></div>
<!-- call stack panel -->
<div class="a" style="left:948px;top:754px;width:617px;height:115px;background:#2d2d30"></div>
<div class="a" style="left:952px;top:756px;height:20px;line-height:20px;font-size:12px;color:#d0d0d0;white-space:nowrap">调用堆栈</div>
<div class="a dots" style="left:1008px;top:763px;width:557px;height:5px"></div>
<div class="a" style="left:948px;top:777px;width:617px;height:92px;background:#252526"></div>
<div class="a" style="left:948px;top:798px;width:617px;height:1px;background:#3f3f46"></div>
<div class="a" style="left:964px;top:777px;width:1px;height:21px;background:#3f3f46"></div>
<div class="a" style="left:970px;top:778px;height:20px;line-height:20px;font-size:12px;color:#f1f1f1">名称</div>
<div class="a" style="left:964px;top:799px;width:1px;height:35px;background:#000"></div>
<div class="a" style="left:948px;top:816px;width:617px;height:1px;background:#000"></div>
<div class="a" style="left:948px;top:833px;width:617px;height:1px;background:#000"></div>
<svg class="a" style="left:951px;top:803px" width="12" height="12" viewBox="0 0 12 12"><path d="M1.6 4.4H6V1.8L10.6 6L6 10.2V7.6H1.6Z" fill="#ffd83c" stroke="#9a7a10" stroke-width="0.6"/></svg>
<svg class="a" style="left:949px;top:818px" width="15" height="15" viewBox="0 0 15 15"><circle cx="7.5" cy="7.5" r="6.2" fill="#e51400" stroke="#fff" stroke-width="1"/></svg>
<div id="cs1" class="a" style="left:969px;top:800px;height:17px;line-height:17px;font-size:11.75px;color:#f1f1f1;white-space:nowrap">CSharpMethodExample.exe!CSharpMethodExample.Calculator.GetConeVolume(double r, double h) 行 28</div>
<div id="cs2" class="a" style="left:969px;top:817px;height:17px;line-height:17px;font-size:11.75px;color:#f1f1f1;white-space:nowrap">CSharpMethodExample.exe!CSharpMethodExample.Program.Main(string[] args) 行 9</div>
<!-- blue highlight rectangle -->
<div class="a" style="left:926px;top:777px;width:598px;height:65px;border:2px solid #0ea5e9"></div>

<div class="a" style="left:6px;top:55px;width:1px;height:814px;background:#3e3e42"></div>

<div id="xl" class="a" style="left:911px;top:0;width:450px;height:705px;background:#fff;overflow:hidden;box-shadow:-1.5px 0 4px 1px rgba(32,88,165,0.9)">
<div class="xa" style="top:-4px">10000103</div>
<svg class="a" style="left:0;top:-4px" width="5" height="5" viewBox="0 0 5 5"><path d="M0 0H3.4L0 3.4Z" fill="#1b6b2a"/></svg>
<div class="xa" style="top:16px">10000104</div>
<svg class="a" style="left:0;top:16px" width="5" height="5" viewBox="0 0 5 5"><path d="M0 0H3.4L0 3.4Z" fill="#1b6b2a"/></svg>
<div class="xa" style="top:36px">10000105</div>
<svg class="a" style="left:0;top:36px" width="5" height="5" viewBox="0 0 5 5"><path d="M0 0H3.4L0 3.4Z" fill="#1b6b2a"/></svg>
<div class="xa" style="top:56px">10000106</div>
<svg class="a" style="left:0;top:56px" width="5" height="5" viewBox="0 0 5 5"><path d="M0 0H3.4L0 3.4Z" fill="#1b6b2a"/></svg>
<div class="xa" style="top:76px">10000107</div>
<svg class="a" style="left:0;top:76px" width="5" height="5" viewBox="0 0 5 5"><path d="M0 0H3.4L0 3.4Z" fill="#1b6b2a"/></svg>
<div class="xa" style="top:96px">10000108</div>
<svg class="a" style="left:0;top:96px" width="5" height="5" viewBox="0 0 5 5"><path d="M0 0H3.4L0 3.4Z" fill="#1b6b2a"/></svg>
<div class="xa" style="top:116px">10000109</div>
<svg class="a" style="left:0;top:116px" width="5" height="5" viewBox="0 0 5 5"><path d="M0 0H3.4L0 3.4Z" fill="#1b6b2a"/></svg>
<div class="xa" style="top:136px">10000110</div>
<svg class="a" style="left:0;top:136px" width="5" height="5" viewBox="0 0 5 5"><path d="M0 0H3.4L0 3.4Z" fill="#1b6b2a"/></svg>
<div class="xa" style="top:156px">10000111</div>
<svg class="a" style="left:0;top:156px" width="5" height="5" viewBox="0 0 5 5"><path d="M0 0H3.4L0 3.4Z" fill="#1b6b2a"/></svg>
<div class="xa" style="top:176px">10000112</div>
<svg class="a" style="left:0;top:176px" width="5" height="5" viewBox="0 0 5 5"><path d="M0 0H3.4L0 3.4Z" fill="#1b6b2a"/></svg>
<div class="xa" style="top:196px">10000113</div>
<svg class="a" style="left:0;top:196px" width="5" height="5" viewBox="0 0 5 5"><path d="M0 0H3.4L0 3.4Z" fill="#1b6b2a"/></svg>
<div class="xa" style="top:216px">10000114</div>
<svg class="a" style="left:0;top:216px" width="5" height="5" viewBox="0 0 5 5"><path d="M0 0H3.4L0 3.4Z" fill="#1b6b2a"/></svg>
<div class="xa" style="top:236px">10000115</div>
<svg class="a" style="left:0;top:236px" width="5" height="5" viewBox="0 0 5 5"><path d="M0 0H3.4L0 3.4Z" fill="#1b6b2a"/></svg>
<div class="xa" style="top:256px">10000116</div>
<svg class="a" style="left:0;top:256px" width="5" height="5" viewBox="0 0 5 5"><path d="M0 0H3.4L0 3.4Z" fill="#1b6b2a"/></svg>
<div class="xa" style="top:276px">10000117</div>
<svg class="a" style="left:0;top:276px" width="5" height="5" viewBox="0 0 5 5"><path d="M0 0H3.4L0 3.4Z" fill="#1b6b2a"/></svg>
<div class="xa" style="top:296px">10000118</div>
<svg class="a" style="left:0;top:296px" width="5" height="5" viewBox="0 0 5 5"><path d="M0 0H3.4L0 3.4Z" fill="#1b6b2a"/></svg>
<div class="xa" style="top:316px">10000119</div>
<svg class="a" style="left:0;top:316px" width="5" height="5" viewBox="0 0 5 5"><path d="M0 0H3.4L0 3.4Z" fill="#1b6b2a"/></svg>
<div class="xa" style="top:336px">10000120</div>
<svg class="a" style="left:0;top:336px" width="5" height="5" viewBox="0 0 5 5"><path d="M0 0H3.4L0 3.4Z" fill="#1b6b2a"/></svg>
<div class="xa" style="top:356px">10000121</div>
<svg class="a" style="left:0;top:356px" width="5" height="5" viewBox="0 0 5 5"><path d="M0 0H3.4L0 3.4Z" fill="#1b6b2a"/></svg>
<div class="xa" style="top:376px">10000122</div>
<svg class="a" style="left:0;top:376px" width="5" height="5" viewBox="0 0 5 5"><path d="M0 0H3.4L0 3.4Z" fill="#1b6b2a"/></svg>
<div class="xa" style="top:396px">10000123</div>
<svg class="a" style="left:0;top:396px" width="5" height="5" viewBox="0 0 5 5"><path d="M0 0H3.4L0 3.4Z" fill="#1b6b2a"/></svg>
<div class="xa" style="top:416px">10000124</div>
<svg class="a" style="left:0;top:416px" width="5" height="5" viewBox="0 0 5 5"><path d="M0 0H3.4L0 3.4Z" fill="#1b6b2a"/></svg>
<div class="xa" style="top:436px">10000125</div>
<svg class="a" style="left:0;top:436px" width="5" height="5" viewBox="0 0 5 5"><path d="M0 0H3.4L0 3.4Z" fill="#1b6b2a"/></svg>
<div class="xa" style="top:456px">10000126</div>
<svg class="a" style="left:0;top:456px" width="5" height="5" viewBox="0 0 5 5"><path d="M0 0H3.4L0 3.4Z" fill="#1b6b2a"/></svg>
<div class="xa" style="top:476px">10000127</div>
<svg class="a" style="left:0;top:476px" width="5" height="5" viewBox="0 0 5 5"><path d="M0 0H3.4L0 3.4Z" fill="#1b6b2a"/></svg>
<div class="xa" style="top:496px">10000128</div>
<svg class="a" style="left:0;top:496px" width="5" height="5" viewBox="0 0 5 5"><path d="M0 0H3.4L0 3.4Z" fill="#1b6b2a"/></svg>
<div class="xa" style="top:516px">10000129</div>
<svg class="a" style="left:0;top:516px" width="5" height="5" viewBox="0 0 5 5"><path d="M0 0H3.4L0 3.4Z" fill="#1b6b2a"/></svg>
<div class="xa" style="top:536px">10000130</div>
<div class="a" style="left:100px;top:536px;width:183px;height:19px;background:#fdb903"></div>
<div class="a" style="left:284px;top:536px;width:166px;height:19px;background:#fdb903"></div>
<svg class="a" style="left:0;top:536px" width="5" height="5" viewBox="0 0 5 5"><path d="M0 0H3.4L0 3.4Z" fill="#1b6b2a"/></svg>
<div class="xa" style="top:556px">10000131</div>
<div class="a" style="left:100px;top:556px;width:183px;height:19px;background:#fdb903"></div>
<div class="a" style="left:284px;top:556px;width:166px;height:19px;background:#fdb903"></div>
<svg class="a" style="left:0;top:556px" width="5" height="5" viewBox="0 0 5 5"><path d="M0 0H3.4L0 3.4Z" fill="#1b6b2a"/></svg>
<div class="xa" style="top:576px">10000132</div>
<div class="a" style="left:100px;top:576px;width:183px;height:19px;background:#fdb903"></div>
<div class="a" style="left:284px;top:576px;width:166px;height:19px;background:#fdb903"></div>
<svg class="a" style="left:0;top:576px" width="5" height="5" viewBox="0 0 5 5"><path d="M0 0H3.4L0 3.4Z" fill="#1b6b2a"/></svg>
<div class="xa" style="top:596px">10000133</div>
<div class="a" style="left:100px;top:596px;width:183px;height:19px;background:#fdb903"></div>
<div class="a" style="left:284px;top:596px;width:166px;height:19px;background:#fdb903"></div>
<svg class="a" style="left:0;top:596px" width="5" height="5" viewBox="0 0 5 5"><path d="M0 0H3.4L0 3.4Z" fill="#1b6b2a"/></svg>
<div class="xa" style="top:616px">10000134</div>
<div class="a" style="left:100px;top:616px;width:183px;height:19px;background:#fdb903"></div>
<div class="a" style="left:284px;top:616px;width:166px;height:19px;background:#fdb903"></div>
<svg class="a" style="left:0;top:616px" width="5" height="5" viewBox="0 0 5 5"><path d="M0 0H3.4L0 3.4Z" fill="#1b6b2a"/></svg>
<div class="xa" style="top:636px">10000135</div>
<div class="a" style="left:100px;top:636px;width:183px;height:19px;background:#fdb903"></div>
<div class="a" style="left:284px;top:636px;width:166px;height:19px;background:#fdb903"></div>
<svg class="a" style="left:0;top:636px" width="5" height="5" viewBox="0 0 5 5"><path d="M0 0H3.4L0 3.4Z" fill="#1b6b2a"/></svg>
<div class="xa" style="top:656px">10000136</div>
<div class="a" style="left:100px;top:656px;width:183px;height:19px;background:#fdb903"></div>
<div class="a" style="left:284px;top:656px;width:166px;height:19px;background:#fdb903"></div>
<svg class="a" style="left:0;top:656px" width="5" height="5" viewBox="0 0 5 5"><path d="M0 0H3.4L0 3.4Z" fill="#1b6b2a"/></svg>
<div class="xa" style="top:676px">10000137</div>
<div class="a" style="left:100px;top:676px;width:183px;height:19px;background:#fdb903"></div>
<div class="a" style="left:284px;top:676px;width:166px;height:19px;background:#fdb903"></div>
<svg class="a" style="left:0;top:676px" width="5" height="5" viewBox="0 0 5 5"><path d="M0 0H3.4L0 3.4Z" fill="#1b6b2a"/></svg>
<div class="xa" style="top:696px">10000138</div>
<div class="a" style="left:100px;top:696px;width:183px;height:19px;background:#8fc6dc"></div>
<div class="a" style="left:284px;top:696px;width:166px;height:19px;background:#90c251"></div>
<svg class="a" style="left:0;top:696px" width="5" height="5" viewBox="0 0 5 5"><path d="M0 0H3.4L0 3.4Z" fill="#1b6b2a"/></svg>
<div class="xa" style="top:716px">10000139</div>
<svg class="a" style="left:0;top:716px" width="5" height="5" viewBox="0 0 5 5"><path d="M0 0H3.4L0 3.4Z" fill="#1b6b2a"/></svg>
<div class="a" style="left:100px;top:15px;width:350px;height:1px;background:#f0f3f5"></div>
<div class="a" style="left:100px;top:35px;width:350px;height:1px;background:#f0f3f5"></div>
<div class="a" style="left:100px;top:55px;width:350px;height:1px;background:#f0f3f5"></div>
<div class="a" style="left:100px;top:75px;width:350px;height:1px;background:#f0f3f5"></div>
<div class="a" style="left:100px;top:95px;width:350px;height:1px;background:#f0f3f5"></div>
<div class="a" style="left:100px;top:115px;width:350px;height:1px;background:#f0f3f5"></div>
<div class="a" style="left:100px;top:135px;width:350px;height:1px;background:#f0f3f5"></div>
<div class="a" style="left:100px;top:155px;width:350px;height:1px;background:#f0f3f5"></div>
<div class="a" style="left:100px;top:175px;width:350px;height:1px;background:#f0f3f5"></div>
<div class="a" style="left:100px;top:195px;width:350px;height:1px;background:#f0f3f5"></div>
<div class="a" style="left:100px;top:215px;width:350px;height:1px;background:#f0f3f5"></div>
<div class="a" style="left:100px;top:235px;width:350px;height:1px;background:#f0f3f5"></div>
<div class="a" style="left:100px;top:255px;width:350px;height:1px;background:#f0f3f5"></div>
<div class="a" style="left:100px;top:275px;width:350px;height:1px;background:#f0f3f5"></div>
<div class="a" style="left:100px;top:295px;width:350px;height:1px;background:#f0f3f5"></div>
<div class="a" style="left:100px;top:315px;width:350px;height:1px;background:#f0f3f5"></div>
<div class="a" style="left:100px;top:335px;width:350px;height:1px;background:#f0f3f5"></div>
<div class="a" style="left:100px;top:355px;width:350px;height:1px;background:#f0f3f5"></div>
<div class="a" style="left:100px;top:375px;width:350px;height:1px;background:#f0f3f5"></div>
<div class="a" style="left:100px;top:395px;width:350px;height:1px;background:#f0f3f5"></div>
<div class="a" style="left:100px;top:415px;width:350px;height:1px;background:#f0f3f5"></div>
<div class="a" style="left:100px;top:435px;width:350px;height:1px;background:#f0f3f5"></div>
<div class="a" style="left:100px;top:455px;width:350px;height:1px;background:#f0f3f5"></div>
<div class="a" style="left:100px;top:475px;width:350px;height:1px;background:#f0f3f5"></div>
<div class="a" style="left:100px;top:495px;width:350px;height:1px;background:#f0f3f5"></div>
<div class="a" style="left:100px;top:515px;width:350px;height:1px;background:#f0f3f5"></div>
<div class="a" style="left:100px;top:535px;width:350px;height:1px;background:#f0f3f5"></div>
<div class="a" style="left:100px;top:555px;width:350px;height:1px;background:#fff3c4"></div>
<div class="a" style="left:100px;top:575px;width:350px;height:1px;background:#fff3c4"></div>
<div class="a" style="left:100px;top:595px;width:350px;height:1px;background:#fff3c4"></div>
<div class="a" style="left:100px;top:615px;width:350px;height:1px;background:#fff3c4"></div>
<div class="a" style="left:100px;top:635px;width:350px;height:1px;background:#fff3c4"></div>
<div class="a" style="left:100px;top:655px;width:350px;height:1px;background:#fff3c4"></div>
<div class="a" style="left:100px;top:675px;width:350px;height:1px;background:#fff3c4"></div>
<div class="a" style="left:100px;top:695px;width:350px;height:1px;background:#fff3c4"></div>
<div class="a" style="left:100px;top:715px;width:350px;height:1px;background:#fff3c4"></div>
<div class="a" style="left:283px;top:0;width:1px;height:535px;background:#f0f3f5"></div>
<div class="a" style="left:283px;top:535px;width:1px;height:170px;background:#fff3c4"></div>
<div class="a" style="left:0;top:15px;width:100px;height:1px;background:#f4f2f8"></div>
<div class="a" style="left:0;top:35px;width:100px;height:1px;background:#f4f2f8"></div>
<div class="a" style="left:0;top:55px;width:100px;height:1px;background:#f4f2f8"></div>
<div class="a" style="left:0;top:75px;width:100px;height:1px;background:#f4f2f8"></div>
<div class="a" style="left:0;top:95px;width:100px;height:1px;background:#f4f2f8"></div>
<div class="a" style="left:0;top:115px;width:100px;height:1px;background:#f4f2f8"></div>
<div class="a" style="left:0;top:135px;width:100px;height:1px;background:#f4f2f8"></div>
<div class="a" style="left:0;top:155px;width:100px;height:1px;background:#f4f2f8"></div>
<div class="a" style="left:0;top:175px;width:100px;height:1px;background:#f4f2f8"></div>
<div class="a" style="left:0;top:195px;width:100px;height:1px;background:#f4f2f8"></div>
<div class="a" style="left:0;top:215px;width:100px;height:1px;background:#f4f2f8"></div>
<div class="a" style="left:0;top:235px;width:100px;height:1px;background:#f4f2f8"></div>
<div class="a" style="left:0;top:255px;width:100px;height:1px;background:#f4f2f8"></div>
<div class="a" style="left:0;top:275px;width:100px;height:1px;background:#f4f2f8"></div>
<div class="a" style="left:0;top:295px;width:100px;height:1px;background:#f4f2f8"></div>
<div class="a" style="left:0;top:315px;width:100px;height:1px;background:#f4f2f8"></div>
<div class="a" style="left:0;top:335px;width:100px;height:1px;background:#f4f2f8"></div>
<div class="a" style="left:0;top:355px;width:100px;height:1px;background:#f4f2f8"></div>
<div class="a" style="left:0;top:375px;width:100px;height:1px;background:#f4f2f8"></div>
<div class="a" style="left:0;top:395px;width:100px;height:1px;background:#f4f2f8"></div>
<div class="a" style="left:0;top:415px;width:100px;height:1px;background:#f4f2f8"></div>
<div class="a" style="left:0;top:435px;width:100px;height:1px;background:#f4f2f8"></div>
<div class="a" style="left:0;top:455px;width:100px;height:1px;background:#f4f2f8"></div>
<div class="a" style="left:0;top:475px;width:100px;height:1px;background:#f4f2f8"></div>
<div class="a" style="left:0;top:495px;width:100px;height:1px;background:#f4f2f8"></div>
<div class="a" style="left:0;top:515px;width:100px;height:1px;background:#f4f2f8"></div>
<div class="a" style="left:0;top:535px;width:100px;height:1px;background:#f4f2f8"></div>
<div class="a" style="left:0;top:555px;width:100px;height:1px;background:#f4f2f8"></div>
<div class="a" style="left:0;top:575px;width:100px;height:1px;background:#f4f2f8"></div>
<div class="a" style="left:0;top:595px;width:100px;height:1px;background:#f4f2f8"></div>
<div class="a" style="left:0;top:615px;width:100px;height:1px;background:#f4f2f8"></div>
<div class="a" style="left:0;top:635px;width:100px;height:1px;background:#f4f2f8"></div>
<div class="a" style="left:0;top:655px;width:100px;height:1px;background:#f4f2f8"></div>
<div class="a" style="left:0;top:675px;width:100px;height:1px;background:#f4f2f8"></div>
<div class="a" style="left:0;top:695px;width:100px;height:1px;background:#f4f2f8"></div>
<div class="a" style="left:0;top:715px;width:100px;height:1px;background:#f4f2f8"></div>
<div class="a" style="left:99px;top:0;width:1px;height:705px;background:#faf8fd"></div>
<div class="a" style="left:286px;top:617px;height:20px;line-height:20px;font-size:14px;color:#3a2a00;white-space:nowrap">GetConeVolume</div>
<div id="note" class="a" style="left:103px;top:205px;width:345px;font-size:17.3px;line-height:22.6px;color:#1e9ad8;font-weight:350;white-space:nowrap"><span class="lt">GetCylinderVolume</span> 返回后，它自己的<br><span class="lt" style="letter-spacing:0.2px">stack frame</span> 被清空。<br>主调函数 <span class="lt">GetConeVolume</span> 调用它时压入<br>栈中的两个参数也清空了。</div>
</div>
</body></html>
